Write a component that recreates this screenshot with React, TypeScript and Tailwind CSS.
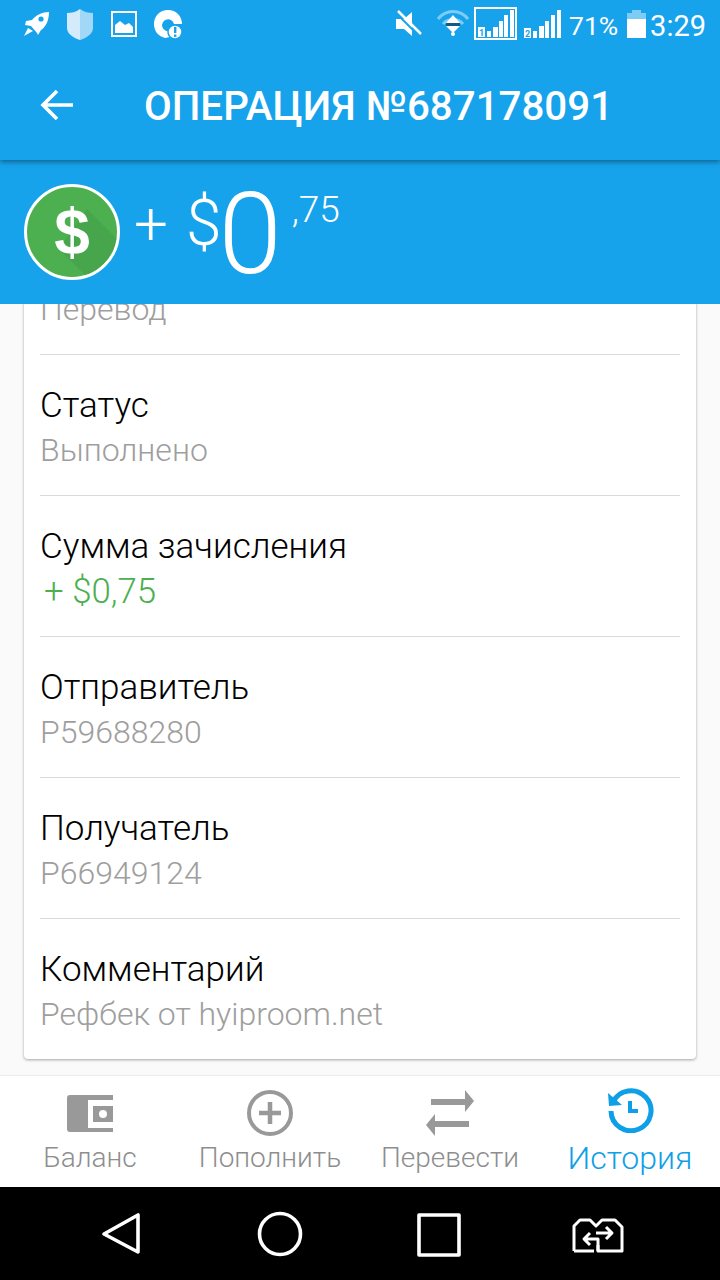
import React from "react";

const rows: { label: string; value: string; green?: boolean }[] = [
  { label: "Статус", value: "Выполнено" },
  { label: "Сумма зачисления", value: "+ $0,75", green: true },
  { label: "Отправитель", value: "P59688280" },
  { label: "Получатель", value: "P66949124" },
  { label: "Комментарий", value: "Рефбек от hyiproom.net" },
];

function StatusIcons() {
  return (
    <svg width="200" height="52" viewBox="0 0 200 52" className="shrink-0">
      {/* rocket */}
      <g fill="#fff">
        <path d="M49 12 C42 12 36 15 32 20 L26 21 L25 25 L31 26 L37 33 L38 35 L41 30 C46 27 49 20 49 12Z" />
        <path d="M28 28 L33 31 L24 36Z" />
      </g>
      <circle cx="41" cy="19" r="2.6" fill="#17a3eb" />
      {/* shield */}
      <path d="M80 9 C76 12 71 13 67 13 V28 C67 34 74 38 80 40Z" fill="#d3ebfb" />
      <path d="M80 9 C84 12 89 13 93 13 V28 C93 34 86 38 80 40Z" fill="#a1d8f8" />
      {/* picture */}
      <rect x="112" y="12" width="24" height="24" fill="none" stroke="#fff" strokeWidth="2" />
      <path d="M115 33 V25 L120 21 L125 25 L129 23 L133 27 V33Z" fill="#fff" />
      {/* disc with alert badge */}
      <path d="M168 10 C160 10 154 16 154 24 C154 31 158 36 165 38 L170 37 V31 A6 6 0 1 1 174 24 L182 24 C182 16 176 10 168 10Z" fill="#fff" />
      <circle cx="175" cy="32" r="7" fill="#fff" stroke="#17a3eb" strokeWidth="1.5" />
      <rect x="174" y="27" width="2.4" height="6" fill="#17a3eb" />
      <rect x="174" y="34.5" width="2.4" height="2.4" fill="#17a3eb" />
    </svg>
  );
}

function StatusRight() {
  return (
    <div className="flex items-start">
      <svg width="208" height="52" viewBox="0 0 208 52" className="shrink-0">
        {/* muted speaker */}
        <g transform="translate(-2 0)">
          <path d="M37 19 H45 L53 12 V36 L45 29 H37Z" fill="#fff" />
          <path d="M37 13 L60 36" stroke="#17a3eb" strokeWidth="2" />
          <path d="M39 11 L62 34" stroke="#fff" strokeWidth="2.5" />
        </g>
        {/* wifi */}
        <g transform="translate(-2 0)">
          <path d="M79 19 C87 9 101 9 109 19" fill="none" stroke="#7dccf5" strokeWidth="3" />
          <path d="M84 24 C89 18 99 18 104 24" fill="none" stroke="#7dccf5" strokeWidth="3" />
          <path d="M94 15 L101 23 H87Z" fill="#fff" />
          <rect x="87" y="23" width="14" height="3" fill="#155a80" />
          <path d="M87 26 H101 L94 33Z" fill="#fff" />
          <circle cx="94" cy="34" r="2" fill="#fff" />
        </g>
        {/* SIM 1 signal */}
        <g transform="translate(-2 0)">
          <rect x="116" y="8" width="41" height="31" fill="none" stroke="#fff" strokeWidth="2" />
          <rect x="119" y="27" width="7" height="10" fill="#fff" />
          <text x="122.5" y="36" textAnchor="middle" fontSize="9" fontWeight="700" fill="#17a3eb">1</text>
          <rect x="128" y="31" width="4" height="6" fill="#fff" />
          <rect x="134" y="27" width="5" height="10" fill="#fff" />
          <rect x="140" y="21" width="4" height="16" fill="#fff" />
          <rect x="145" y="15" width="4" height="22" fill="#fff" />
          <rect x="151" y="10" width="4" height="27" fill="#fff" />
        </g>
        {/* SIM 2 signal */}
        <g transform="translate(-2 0)">
          <rect x="165" y="28" width="7" height="10" fill="#fff" />
          <text x="168.5" y="37" textAnchor="middle" fontSize="9" fontWeight="700" fill="#17a3eb">2</text>
          <rect x="174" y="31" width="4" height="7" fill="#fff" />
          <rect x="180" y="26" width="5" height="12" fill="#fff" />
          <rect x="186" y="21" width="4" height="17" fill="#fff" />
          <rect x="192" y="15" width="4" height="23" fill="#fff" />
          <rect x="198" y="10" width="4" height="28" fill="#fff" />
        </g>
      </svg>
      <span className="text-[26.5px] leading-[52px] font-normal text-white w-[59px]">71%</span>
      <svg width="20" height="52" viewBox="0 0 20 52" className="-ml-[2px] shrink-0">
        <rect x="1" y="13" width="19" height="6" fill="#7dccf5" />
        <rect x="6" y="10" width="9" height="3" fill="#7dccf5" />
        <rect x="1" y="19" width="19" height="19" fill="#fff" />
      </svg>
      <span className="text-[29px] leading-[52px] text-white ml-[4px]">3:29</span>
    </div>
  );
}

function DollarBadge() {
  return (
    <div className="relative w-[96px] h-[96px] shrink-0 rounded-full border-[3px] border-white bg-[#4caf50] overflow-hidden flex items-center justify-center">
      <svg width="90" height="90" viewBox="0 0 90 90" className="absolute left-0 top-0">
        <path d="M60 22 L92 54 V92 H62 L32 62Z" fill="#3f9142" opacity="0.35" />
      </svg>
      <span className="relative text-white font-bold text-[64px] leading-none font-['Liberation_Sans',sans-serif]">$</span>
    </div>
  );
}

function Tab({ label, active, icon }: { label: string; active?: boolean; icon: React.ReactNode }) {
  return (
    <div className="flex-1 flex flex-col items-center">
      <div className="h-[55px] flex items-center justify-center">{icon}</div>
      <span className={active ? "text-[32px] leading-[36px] font-light text-[#0f9fe6]" : "text-[28px] leading-[36px] font-light text-[#8e8e8e]"}>{label}</span>
    </div>
  );
}

export default function App() {
  return (
    <div className="w-[720px] h-[1280px] flex flex-col overflow-hidden bg-[#fafafa] font-['Roboto',sans-serif]">
      <header className="relative z-10 h-[160px] shrink-0 bg-[#17a3eb] shadow-[0_2px_5px_rgba(0,0,0,0.4)] flex flex-col">
        <div className="h-[52px] flex justify-between pr-[14px]">
          <StatusIcons />
          <StatusRight />
        </div>
        <div className="flex-1 flex items-center pl-[40px] pt-[2px]">
          <svg width="34" height="34" viewBox="0 0 34 34" fill="none" stroke="#fff" strokeWidth="3.6" className="-mt-[4px]">
            <path d="M33 17 H3 M17 3 L3 17 L17 31" />
          </svg>
          <h1 className="ml-[70px] text-[40.3px] leading-[46px] font-medium text-white whitespace-nowrap">ОПЕРАЦИЯ №687178091</h1>
        </div>
      </header>

      <section className="h-[144px] shrink-0 bg-[#17a3eb] flex items-start pl-[24px] pt-[24px] text-white">
        <DollarBadge />
        <div className="flex items-start ml-[14px]">
          <span className="text-[60px] leading-[80px] font-light">+</span>
          <span className="text-[64px] leading-[80px] ml-[18px] font-light">$</span>
          <span className="text-[114px] leading-[136px] -ml-[3px] -mt-[18px] font-light">0</span>
          <span className="text-[37px] leading-[48px] ml-[10px] mt-[2px] font-light">,75</span>
        </div>
      </section>

      <main className="flex-1 min-h-0 overflow-hidden px-[24px]">
        <div className="-mt-[90px] bg-white rounded-[4px] shadow-[0_1px_3px_rgba(0,0,0,0.35)] px-[16px] h-[845px]">
          <div className="h-[141px] border-b border-[#d9d9d9] flex flex-col justify-end pb-[22px]">
            <span className="text-[32px] leading-[46px] font-light text-[#9e9e9e]">Перевод</span>
          </div>
          {rows.map((r, i) => (
            <div key={r.label} className={i < rows.length - 1 ? "h-[141px] border-b border-[#d9d9d9] pt-[28px]" : "h-[140px] pt-[28px]"}>
              <div className="text-[35px] leading-[46px] text-black font-light">{r.label}</div>
              <div className={r.green ? "text-[34.8px] leading-[46px] -mt-[2px] font-light text-[#4caf50] pl-[4px]" : "text-[32px] leading-[46px] -mt-[2px] font-light text-[#9e9e9e]"}>{r.value}</div>
            </div>
          ))}
        </div>
      </main>

      <nav className="h-[112px] shrink-0 bg-white border-t border-[#ececec] flex pt-[9px]">
        <Tab label="Баланс" icon={
          <svg width="48" height="38" viewBox="0 0 48 38" fill="#999" className="mt-[3px]">
            <path d="M4 0 H47 V5 H22 V33 H47 V37 H4 A3 3 0 0 1 1 34 V3 A3 3 0 0 1 4 0Z" />
            <path d="M27 11 H47 V27 H27Z M37 15 A4 4 0 1 0 37 23 A4 4 0 1 0 37 15Z" fillRule="evenodd" />
          </svg>
        } />
        <Tab label="Пополнить" icon={
          <svg width="48" height="48" viewBox="0 0 48 48" fill="none" stroke="#999">
            <circle cx="24" cy="24" r="21" strokeWidth="4" />
            <path d="M24 13 V35 M13 24 H35" strokeWidth="4.5" />
          </svg>
        } />
        <Tab label="Перевести" icon={
          <svg width="48" height="46" viewBox="0 0 48 46" fill="#999">
            <path d="M5 9 H39 V0 L48 11 L39 22 V15 H5Z" />
            <path d="M43 31 H9 V24 L0 35 L9 46 V37 H43Z" />
          </svg>
        } />
        <Tab label="История" active icon={
          <svg width="48" height="48" viewBox="0 0 48 48" fill="none" stroke="#0f9fe6" className="-mt-[7px]">
            <path d="M7 17 A20 20 0 1 1 5 26" strokeWidth="5" />
            <path d="M2 8 L3 21 L16 20Z" fill="#0f9fe6" stroke="none" />
            <path d="M24 16 V26 H32" strokeWidth="4" />
          </svg>
        } />
      </nav>

      <footer className="h-[93px] shrink-0 bg-black flex items-center">
        <svg width="720" height="93" viewBox="0 0 720 93" fill="none" stroke="#fff" strokeWidth="3.6" strokeLinejoin="round">
          <path d="M138 28 V65 L104 47Z" />
          <circle cx="280" cy="47" r="20.5" />
          <rect x="419" y="28" width="40" height="40" />
          {/* recent-apps toggle: two overlapped cards with swap arrows */}
          <path d="M574 64 V39 L580 33 H590 L596 39 L602 33 H615 L622 40 V64 H598 V58 M594 64 H574" strokeWidth="3" />
          <path d="M612 46 H596 M606 40 L612 46 L606 52" strokeWidth="3" />
          <path d="M584 52 H598 V64 M590 46 L584 52 L590 58" strokeWidth="3" />
        </svg>
      </footer>
    </div>
  );
}
